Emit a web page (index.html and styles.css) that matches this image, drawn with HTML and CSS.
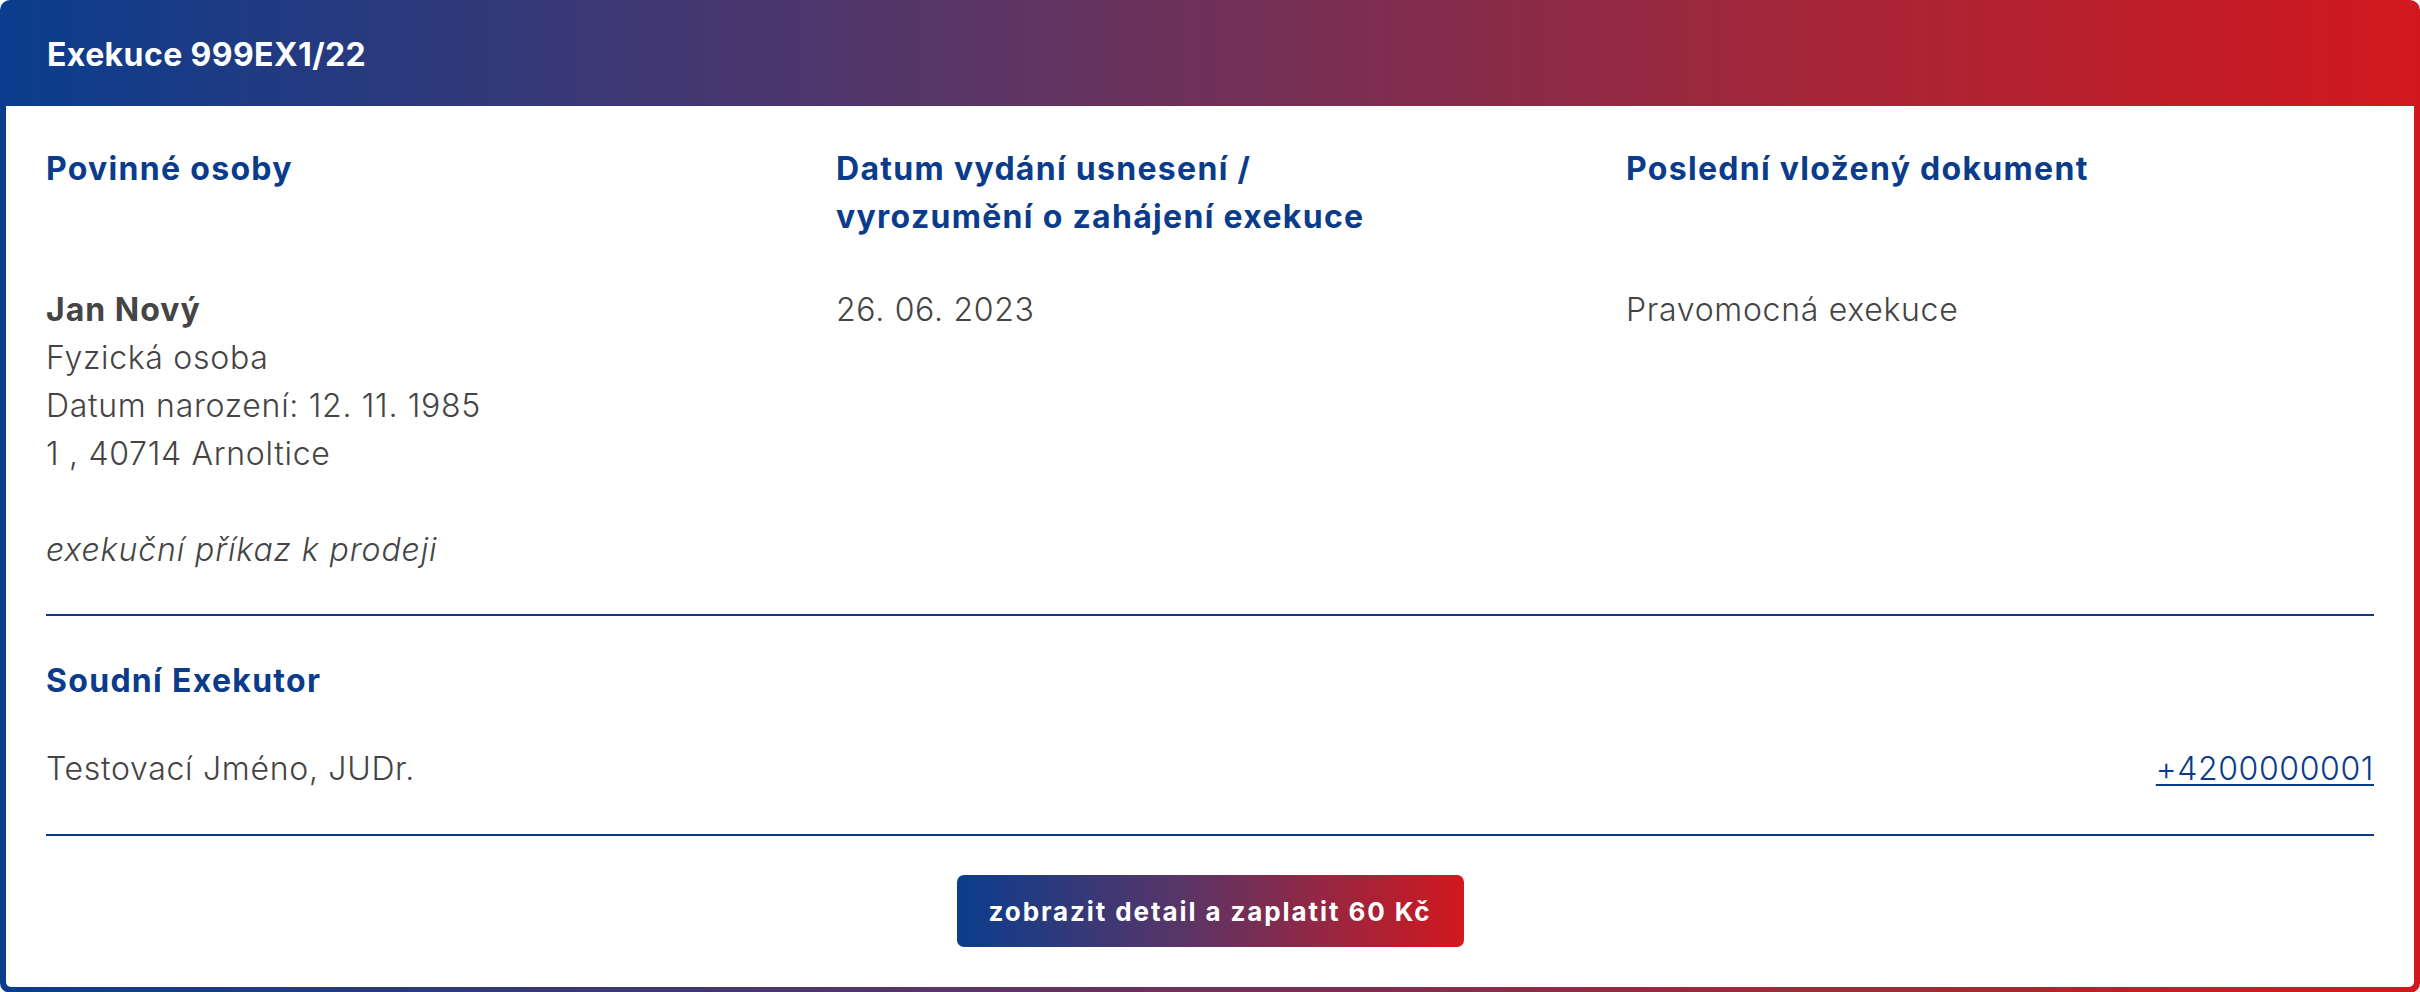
FILE: index.html
```html
<!DOCTYPE html>
<html lang="cs">
<head>
<meta charset="utf-8">
<title>Exekuce 999EX1/22</title>
<link rel="stylesheet" href="styles.css">
</head>
<body>
<div class="card">
  <div class="card-header">Exekuce 999EX1/22</div>
  <div class="card-body">
    <div class="info-grid">
      <div class="label">Povinné osoby</div>
      <div class="label">Datum vydání usnesení /<br>vyrozumění o zahájení exekuce</div>
      <div class="label">Poslední vložený dokument</div>
      <div class="value">
        <div class="name">Jan Nový</div>
        <div>Fyzická osoba</div>
        <div>Datum narození: 12. 11. 1985</div>
        <div>1 , 40714 Arnoltice</div>
        <div class="note">exekuční příkaz k prodeji</div>
      </div>
      <div class="value">26. 06. 2023</div>
      <div class="value">Pravomocná exekuce</div>
    </div>
    <div class="divider"></div>
    <div class="section">
      <div class="label section-label">Soudní Exekutor</div>
      <div class="row">
        <div class="value">Testovací Jméno, JUDr.</div>
        <a class="phone" href="#">+4200000001</a>
      </div>
    </div>
    <div class="divider divider-bottom"></div>
    <div class="actions">
      <button class="pay-btn" type="button">zobrazit detail a zaplatit 60 Kč</button>
    </div>
  </div>
</div>
</body>
</html>
```
FILE: styles.css
```css
html, body {
  margin: 0;
  padding: 0;
  background: #ffffff;
}
body {
  font-family: "Inter", "Open Sans", sans-serif;
}
.card {
  width: 2420px;
  box-sizing: border-box;
  background: linear-gradient(90deg, #0a3d8d 0%, #5a3566 40%, #a52638 75%, #d2181e 100%);
  border-radius: 10px;
  padding: 0 6px 6px 6px;
}
.card-header {
  height: 106px;
  box-sizing: border-box;
  display: flex;
  align-items: center;
  padding: 3px 0 0 41px;
  color: #ffffff;
  font-weight: 700;
  font-size: 32px;
  letter-spacing: 0.4px;
}
.card-body {
  background: #ffffff;
  border-radius: 0 0 5px 5px;
  padding: 39px 40px 40px 40px;
}
.info-grid {
  display: grid;
  grid-template-columns: repeat(3, 1fr);
  column-gap: 42px;
  row-gap: 45px;
}
.label {
  color: #0b3c8c;
  font-weight: 700;
  font-size: 32px;
  line-height: 48px;
  letter-spacing: 1.3px;
}
.value {
  color: #444444;
  font-weight: 300;
  font-size: 32px;
  line-height: 48px;
  letter-spacing: 0.7px;
}
.name {
  font-weight: 700;
  color: #454545;
  letter-spacing: 1px;
}
.note {
  font-style: italic;
  margin-top: 48px;
  letter-spacing: 0.9px;
}
.divider {
  height: 2px;
  background: #0b3c8c;
  margin-top: 40px;
}
.section {
  padding-top: 41px;
}
.section-label {
  margin-bottom: 40px;
}
.row {
  display: flex;
  justify-content: space-between;
  align-items: baseline;
}
.phone {
  color: #0b3c8c;
  font-weight: 300;
  font-size: 32px;
  line-height: 48px;
  letter-spacing: 0.6px;
  text-decoration: underline;
  text-decoration-thickness: 2px;
  text-underline-offset: 4px;
}
.divider-bottom {
  margin-top: 41px;
}
.actions {
  display: flex;
  justify-content: center;
  margin-top: 39px;
}
.pay-btn {
  height: 72px;
  width: 507px;
  border: none;
  border-radius: 7px;
  background: linear-gradient(90deg, #0a3d8d 0%, #5a3566 45%, #d2181e 100%);
  color: #ffffff;
  font-family: "Inter", "Open Sans", sans-serif;
  font-weight: 700;
  font-size: 26px;
  letter-spacing: 1.9px;
  padding: 0;
  cursor: pointer;
}
```
